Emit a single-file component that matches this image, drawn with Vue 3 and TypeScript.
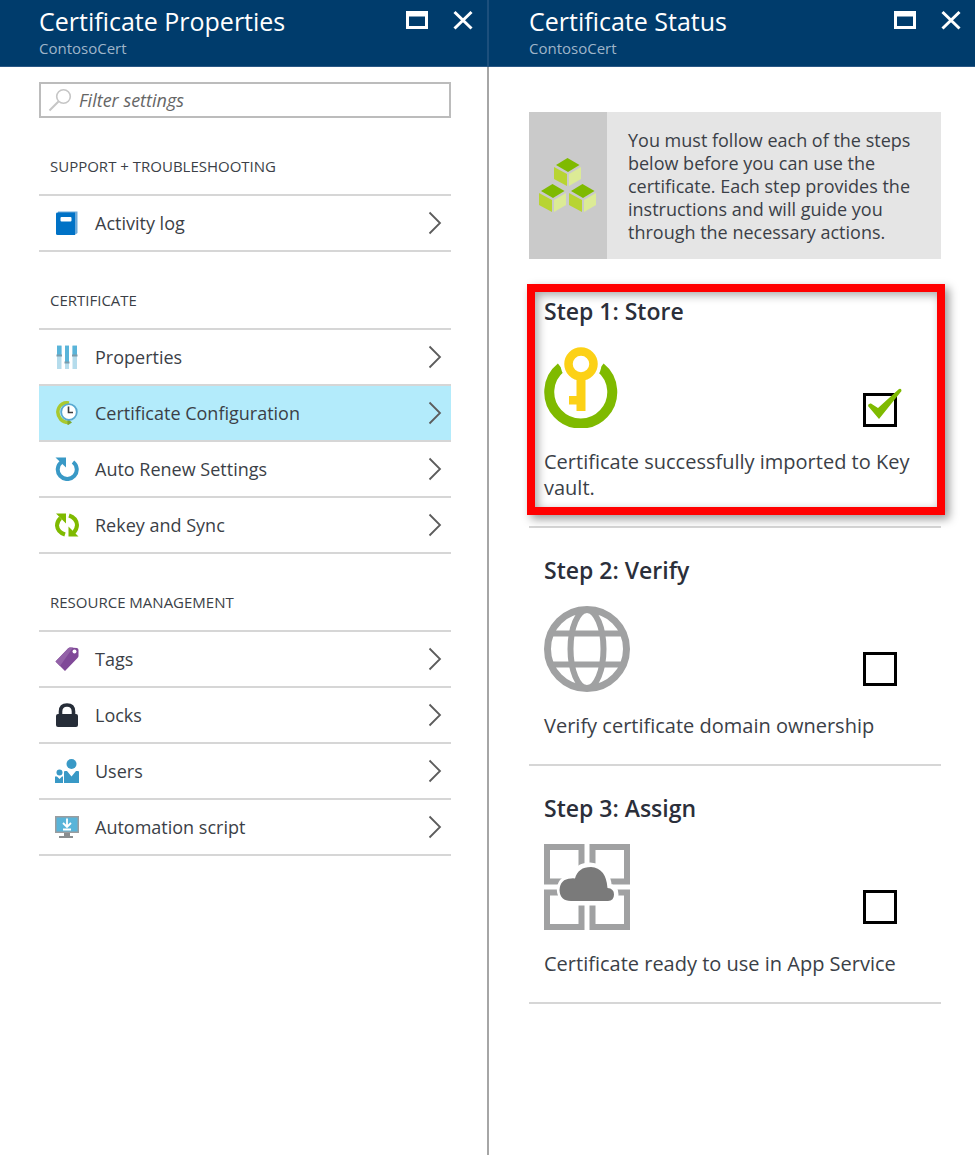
<script setup lang="ts">
import { ref } from 'vue'

type IconName = 'log' | 'sliders' | 'history' | 'renew' | 'sync' | 'tag' | 'lock' | 'users' | 'script'
interface Item { label: string; icon: IconName; selected?: boolean }
interface Group { title: string; items: Item[] }
interface Step { id: string; title: string; text: string; icon: 'key' | 'globe' | 'assign'; done: boolean; highlight?: boolean }

const filter = ref('')

const groups: Group[] = [
  { title: 'SUPPORT + TROUBLESHOOTING', items: [{ label: 'Activity log', icon: 'log' }] },
  {
    title: 'CERTIFICATE',
    items: [
      { label: 'Properties', icon: 'sliders' },
      { label: 'Certificate Configuration', icon: 'history', selected: true },
      { label: 'Auto Renew Settings', icon: 'renew' },
      { label: 'Rekey and Sync', icon: 'sync' },
    ],
  },
  {
    title: 'RESOURCE MANAGEMENT',
    items: [
      { label: 'Tags', icon: 'tag' },
      { label: 'Locks', icon: 'lock' },
      { label: 'Users', icon: 'users' },
      { label: 'Automation script', icon: 'script' },
    ],
  },
]

const steps = ref<Step[]>([
  { id: 'store', title: 'Step 1: Store', text: 'Certificate successfully imported to Key vault.', icon: 'key', done: true, highlight: true },
  { id: 'verify', title: 'Step 2: Verify', text: 'Verify certificate domain ownership', icon: 'globe', done: false },
  { id: 'assign', title: 'Step 3: Assign', text: 'Certificate ready to use in App Service', icon: 'assign', done: false },
])
</script>

<template>
  <main class="blades">
    <section class="blade properties">
      <header class="bar">
        <div class="names">
          <h1>Certificate Properties</h1>
          <p>ContosoCert</p>
        </div>
        <div class="controls">
          <button type="button" aria-label="Maximize Certificate Properties">
            <svg width="22" height="20" viewBox="0 0 22 20"><path d="M0 1h22v18H0zM3 6.500v9.500h16V6.500z" fill="#fff" fill-rule="evenodd" /></svg>
          </button>
          <button type="button" aria-label="Close Certificate Properties">
            <svg width="20" height="20" viewBox="0 0 20 20"><path d="M1.500 2l17 16.500M18.500 2l-17 16.500" stroke="#fff" stroke-width="3" /></svg>
          </button>
        </div>
      </header>

      <div class="settings">
        <label class="search">
          <svg width="24" height="24" viewBox="0 0 24 24" fill="none" stroke="#c6c6c6" aria-hidden="true">
            <circle cx="15.500" cy="8.500" r="6.800" stroke-width="1.600" /><path d="M10.500 13.500L1.500 22.500" stroke-width="2" />
          </svg>
          <input v-model="filter" type="text" placeholder="Filter settings" aria-label="Filter settings" />
        </label>

        <nav v-for="group in groups" :key="group.title" class="group" :aria-label="group.title">
          <h2>{{ group.title }}</h2>
          <ul>
            <li v-for="item in group.items" :key="item.label">
              <a href="#" class="item" :class="{ selected: item.selected }" :aria-current="item.selected ? 'page' : undefined">
                <svg class="glyph" width="24" height="24" viewBox="0 0 24 24" aria-hidden="true">
                  <template v-if="item.icon === 'log'">
                    <path d="M3 .500h19.500V22l-2 1.500H3z" fill="#6aa9da" />
                    <path d="M1 2.500Q1 1.500 2.500 1.500H20V24H2.500Q1 24 1 22.500z" fill="#0072c6" />
                    <rect x="5.500" y="6" width="11" height="4.500" rx="1" fill="#fff" />
                  </template>
                  <template v-else-if="item.icon === 'sliders'">
                    <path d="M2 0h4.500v24H2zM10 0h4v24h-4zM17.500 0H22v24h-4.500z" fill="#b5dcec" />
                    <path d="M2 1h4.500v9H2zM10 1h4v16h-4zM17.500 1H22v9h-4.500z" fill="#59b4d9" />
                    <path d="M1.500 9.500h5.500v2H1.500zM9.500 16.500h5v2h-5zM17 9.500h5.500v2H17z" fill="#7a9bab" />
                  </template>
                  <template v-else-if="item.icon === 'history'">
                    <path d="M14 2Q7 1 4 6.500T5.500 18q3 3.500 8 3.500" fill="none" stroke="#a9c92f" stroke-width="3.500" />
                    <path d="M12.500 17.500l4.500 4-4.500 3z" fill="#7fa82f" />
                    <circle cx="14" cy="11" r="7.800" fill="#fff" stroke="#59a9d0" stroke-width="1.800" />
                    <path d="M13.500 5.500v6h4.500" fill="none" stroke="#3e3e3e" stroke-width="1.600" />
                  </template>
                  <template v-else-if="item.icon === 'renew'">
                    <path d="M6.500 5A9.500 9.500 0 1 0 18 5" fill="none" stroke="#3999c6" stroke-width="4" />
                    <path d="M.500.500h10.500v10z" fill="#3999c6" />
                  </template>
                  <template v-else-if="item.icon === 'sync'">
                    <path d="M5.500 5Q2 8.500 2 12.500 2.500 19 10 21.500M18.500 20q3.500-4 3.500-8Q21.500 5 14 2.500" fill="none" stroke="#7fba00" stroke-width="4" />
                    <path d="M1 .500h10v10zM23.500 23.500h-10v-10z" fill="#7fba00" />
                  </template>
                  <template v-else-if="item.icon === 'tag'">
                    <path d="M.500 14.500L13 1.500q1-1 2-1L22 1q1.500.500 1.500 2v6q0 1-1 2L10 24z" fill="#804998" />
                    <path d="M.500 14.500L13 1.500q1-1 2-1h3L5 19z" fill="#9362a8" />
                    <circle cx="19.500" cy="4.500" r="2" fill="#fff" />
                  </template>
                  <template v-else-if="item.icon === 'lock'">
                    <path d="M5.500 12V8.500Q5.500 2 12 2t6.500 6.500V12" fill="none" stroke="#262d38" stroke-width="3.600" />
                    <rect x="1" y="11" width="22" height="13" rx="2" fill="#262d38" />
                  </template>
                  <template v-else-if="item.icon === 'users'">
                    <g fill="#3999c6">
                      <circle cx="16.500" cy="5" r="5" /><circle cx="4.500" cy="13.500" r="3" />
                      <path d="M9 13q0-1 1-1h2l4.500 5.500L21 12h2q1 0 1 1v11H9zM0 17.500h2L4.500 20 7 17.500h1V24H0z" />
                    </g>
                  </template>
                  <template v-else>
                    <rect x="0" y="1" width="24" height="17" fill="#9a9d9f" />
                    <rect x="1.500" y="2.500" width="21" height="14" fill="#59b4d9" />
                    <path d="M9 18h6v3h3v2H4v-2h5z" fill="#8b8e90" />
                    <path d="M12 3.500v8M8 8l4 4 4-4M8 14.500h8" fill="none" stroke="#fff" stroke-width="1.800" />
                  </template>
                </svg>
                <span>{{ item.label }}</span>
                <svg class="chevron" width="14" height="24" viewBox="0 0 14 24" aria-hidden="true">
                  <path d="M1.500 1.500L12 12 1.500 22.500" fill="none" stroke="#5c5c5c" stroke-width="1.800" />
                </svg>
              </a>
            </li>
          </ul>
        </nav>
      </div>
    </section>

    <section class="blade">
      <header class="bar">
        <div class="names">
          <h1>Certificate Status</h1>
          <p>ContosoCert</p>
        </div>
        <div class="controls">
          <button type="button" aria-label="Maximize Certificate Status">
            <svg width="22" height="20" viewBox="0 0 22 20"><path d="M0 1h22v18H0zM3 6.500v9.500h16V6.500z" fill="#fff" fill-rule="evenodd" /></svg>
          </button>
          <button type="button" aria-label="Close Certificate Status">
            <svg width="20" height="20" viewBox="0 0 20 20"><path d="M1.500 2l17 16.500M18.500 2l-17 16.500" stroke="#fff" stroke-width="3" /></svg>
          </button>
        </div>
      </header>

      <div class="status">
        <aside class="notice">
          <div class="badge">
            <svg width="58" height="58" viewBox="0 0 58 58" aria-hidden="true">
              <defs>
                <g id="cube">
                  <path d="M13.500 0L25.500 7 14 14 2 7z" fill="#7fba00" />
                  <path d="M0 9l13 7v12L0 21z" fill="#b8d432" />
                  <path d="M27 9l-12 7v12l12-7z" fill="#dceb96" />
                </g>
              </defs>
              <use href="#cube" x="15" y="1" /><use href="#cube" x="0" y="27" /><use href="#cube" x="30" y="27" />
            </svg>
          </div>
          <p>You must follow each of the steps below before you can use the certificate. Each step provides the instructions and will guide you through the necessary actions.</p>
        </aside>

        <article v-for="step in steps" :key="step.id" class="step">
          <h2>{{ step.title }}</h2>
          <div class="figure">
            <svg v-if="step.icon === 'key'" width="74" height="81" viewBox="0 0 74 81" aria-hidden="true">
              <path d="M17 20.500A31.500 31.500 0 1 0 56.500 20.500" fill="none" stroke="#7fba00" stroke-width="10" />
              <circle cx="37" cy="17" r="20.500" fill="#fff" />
              <circle cx="37" cy="17" r="12.500" fill="none" stroke="#fcd116" stroke-width="8.500" />
              <path d="M32.500 31h9v33h-9v-6.500H25V49h7.500z" fill="#fcd116" />
            </svg>
            <svg v-else-if="step.icon === 'globe'" width="86" height="86" viewBox="0 0 86 86" fill="none" stroke="#a0a1a2" stroke-width="6" aria-hidden="true">
              <circle cx="43" cy="43" r="39.500" stroke-width="7" />
              <ellipse cx="43" cy="43" rx="16.500" ry="39" />
              <path d="M7 27.500h72M7 58.500h72" />
            </svg>
            <svg v-else width="86" height="86" viewBox="0 0 86 86" aria-hidden="true">
              <path d="M3 3h34.500v34.500H3zM48.500 3H83v34.500H48.500zM3 48.500h34.500V83H3zM48.500 48.500H83V83H48.500z" fill="none" stroke="#a0a1a2" stroke-width="6" />
              <path d="M27 57a11.500 11.500 0 0 1-1-22.500q2-.500 5 0Q34 23 46 23q16 1 17.500 21 6.500.500 6.500 6.500T64 57z" fill="#fff" stroke="#fff" stroke-width="9" stroke-linejoin="round" />
              <path d="M27 57Q16 57 15.500 46 16 35 27 34.500q2-.500 4 0Q34 23 47 23q15 1 16.500 21 6.500.500 6.500 6.500T64 57z" fill="#7a7a7a" />
            </svg>
            <label class="tick">
              <input v-model="step.done" type="checkbox" :aria-label="step.title" />
              <svg v-if="step.done" width="34" height="31" viewBox="0 0 34 31" aria-hidden="true">
                <path d="M0 18q0-3 3-2.500l7 4.500L31 1q2.500-1 2.500 2L11 31z" fill="#7fba00" />
              </svg>
            </label>
          </div>
          <p>{{ step.text }}</p>
          <div v-if="step.highlight" class="highlight"></div>
        </article>
      </div>
    </section>
  </main>
</template>

<style>
body {
  margin: 0;
  background: #fff;
}
</style>

<style scoped>
.blades {
  display: grid;
  grid-template-columns: 489fr 486fr;
  min-height: 100vh;
  font-family: "Open Sans", "Noto Sans", sans-serif;
  color: #3b3f47;
}
.blade {
  display: flex;
  flex-direction: column;
  min-width: 0;
}
h1, h2, p, ul {
  margin: 0;
  padding: 0;
  font-weight: 400;
}
ul {
  list-style: none;
}
.bar {
  display: flex;
  justify-content: space-between;
  height: 67px;
  box-sizing: border-box;
  padding: 4px 4px 0 40px;
  background: #003c6c;
  color: #fff;
  border-bottom: 1px solid #2a5885;
}
.properties .bar {
  padding-left: 39px;
  border-right: 2px solid #1c4f7c;
}
h1 {
  font-size: 25px;
  line-height: 34px;
}
.names p {
  font-size: 15px;
  line-height: 20px;
  color: #9fb5c9;
}
.controls {
  display: flex;
  align-items: flex-start;
  gap: 6px;
}
.controls button {
  display: flex;
  align-items: center;
  justify-content: center;
  width: 40px;
  height: 32px;
  padding: 0;
  border: 0;
  background: none;
}
.settings {
  flex: 1;
  padding: 15px 36px 0 39px;
  border-right: 2px solid #a6a6a6;
}
.search {
  display: flex;
  align-items: center;
  gap: 7px;
  height: 36px;
  box-sizing: border-box;
  padding: 0 7px;
  border: 2px solid #bcbcbc;
}
.search input {
  flex: 1;
  min-width: 0;
  padding: 0;
  border: 0;
  outline: 0;
  background: none;
  font: italic 18px/24px "Open Sans", "Noto Sans", sans-serif;
  color: #3b3f47;
}
.search input::placeholder {
  color: #666;
  opacity: 1;
}
.group h2 {
  padding: 37px 11px 17px;
  font-size: 15px;
  line-height: 22px;
}
.group ul {
  border-top: 2px solid #d6d6d6;
}
.item {
  display: flex;
  align-items: center;
  height: 56px;
  box-sizing: border-box;
  padding: 0 9px 0 16px;
  border-bottom: 2px solid #d6d6d6;
  color: inherit;
  font-size: 18px;
  line-height: 24px;
  text-decoration: none;
}
.item.selected {
  background: #b3ebfb;
}
.item span {
  flex: 1;
  margin-left: 16px;
}
.status {
  padding: 45px 34px 0 40px;
}
.notice {
  display: flex;
  margin-bottom: 10px;
  background: #e5e5e5;
}
.badge {
  display: flex;
  flex: none;
  align-items: center;
  justify-content: center;
  width: 78px;
  background: #cacaca;
}
.notice p {
  padding: 17px 21px 15px;
  font-size: 18px;
  line-height: 23px;
}
.step {
  position: relative;
  padding: 27px 15px 25px;
  border-bottom: 2px solid #d6d6d6;
}
.step h2 {
  font-size: 23px;
  font-weight: 600;
  line-height: 30px;
  color: #2b2f3a;
}
.figure {
  display: flex;
  align-items: flex-start;
  justify-content: space-between;
  margin: 21px 0;
  padding-right: 29px;
}
.step p {
  font-size: 20px;
  line-height: 26px;
}
.tick {
  position: relative;
  margin-top: 46px;
}
.tick input {
  display: block;
  width: 34px;
  height: 34px;
  margin: 0;
  border: 3px solid #000;
  appearance: none;
}
.tick svg {
  position: absolute;
  left: 5px;
  top: -5px;
}
.highlight {
  position: absolute;
  inset: 15px -4px 11px -2px;
  border: 8px solid #f00;
  box-shadow: 4px 4px 9px rgb(0 0 0 / 40%), inset 3px 3px 10px rgb(0 0 0 / 35%);
  pointer-events: none;
}
</style>
